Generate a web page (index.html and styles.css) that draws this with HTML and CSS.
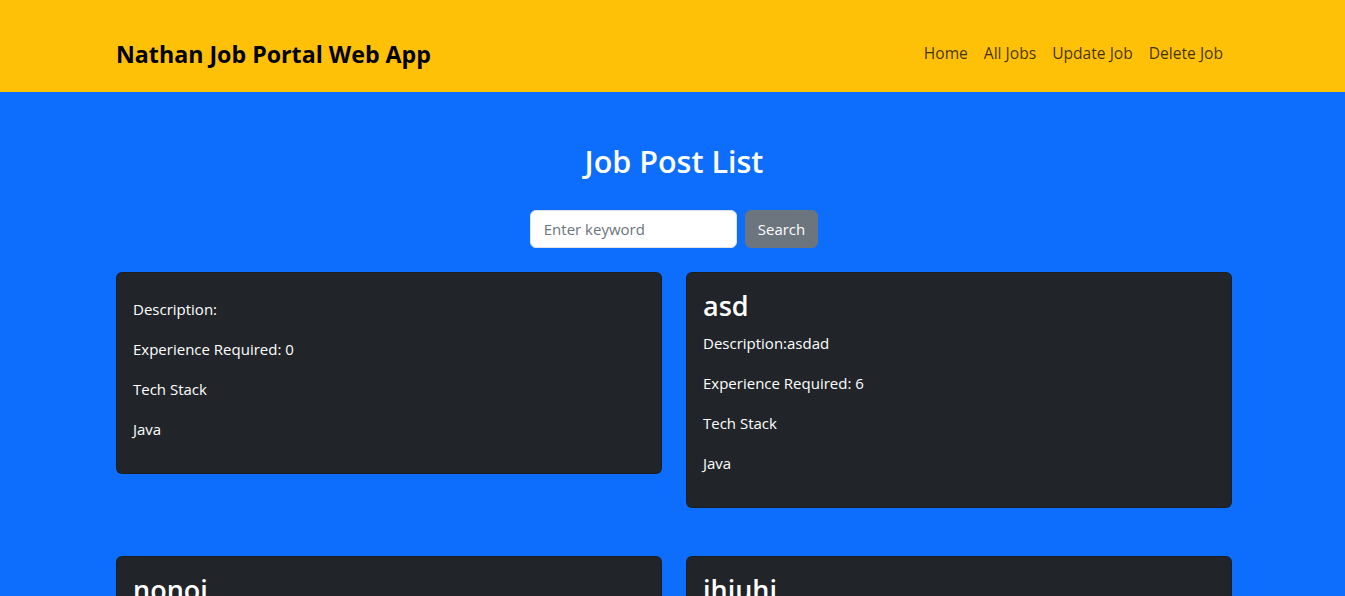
FILE: index.html
```html
<!DOCTYPE html>
<html lang="en">
<head>
<meta charset="utf-8">
<title>Nathan Job Portal Web App</title>
<link rel="stylesheet" href="styles.css">
</head>
<body>
<header class="navbar">
  <div class="container nav-inner">
    <a class="brand" href="#">Nathan Job Portal Web App</a>
    <nav class="nav-links">
      <a class="nav-link" href="#">Home</a>
      <a class="nav-link" href="#">All Jobs</a>
      <a class="nav-link" href="#">Update Job</a>
      <a class="nav-link" href="#">Delete Job</a>
    </nav>
  </div>
</header>
<main class="main">
  <div class="container">
    <h2 class="page-title">Job Post List</h2>
    <form class="search">
      <input class="search-input" type="text" placeholder="Enter keyword">
      <button class="search-btn" type="button">Search</button>
    </form>
    <div class="grid">
      <div class="card">
        <h2 class="card-title"></h2>
        <p>Description:</p>
        <p>Experience Required: 0</p>
        <p>Tech Stack</p>
        <p>Java</p>
      </div>
      <div class="card">
        <h2 class="card-title">asd</h2>
        <p>Description:asdad</p>
        <p>Experience Required: 6</p>
        <p>Tech Stack</p>
        <p>Java</p>
      </div>
      <div class="card">
        <h2 class="card-title">nonoi</h2>
        <p>Description:nono</p>
        <p>Experience Required: 2</p>
        <p>Tech Stack</p>
        <p>Java</p>
      </div>
      <div class="card">
        <h2 class="card-title">ihiuhi</h2>
        <p>Description:hiuh</p>
        <p>Experience Required: 3</p>
        <p>Tech Stack</p>
        <p>Java</p>
      </div>
    </div>
  </div>
</main>
</body>
</html>
```
FILE: styles.css
```css
* { box-sizing: border-box; }
html, body { margin: 0; padding: 0; }
body {
  font-family: "Open Sans", "Noto Sans", sans-serif;
  font-size: 15px;
  line-height: 24px;
  color: #212529;
  background: #0d6efd;
  overflow: hidden;
}
.container {
  width: 1116px;
  margin: 0 0 0 116px;
}
.navbar {
  background: #ffc107;
  height: 92px;
  display: flex;
  align-items: center;
}
.nav-inner {
  display: flex;
  align-items: center;
  justify-content: space-between;
  padding-top: 14px;
}
.brand {
  font-size: 23.2px;
  font-weight: 700;
  color: #000;
  text-decoration: none;
  margin-top: 1px;
}
.nav-links { display: flex; margin-right: 1px; }
.nav-link {
  padding: 8px;
  font-size: 15.6px;
  color: rgba(0,0,0,0.75);
  text-decoration: none;
}
.main { padding-top: 50px; }
.page-title {
  margin: 0 0 30px;
  text-align: center;
  color: #fff;
  font-size: 30.5px;
  font-weight: 600;
  line-height: 38px;
}
.search {
  display: flex;
  justify-content: center;
  gap: 8px;
  margin-bottom: 24px;
}
.search-input {
  width: 207px;
  height: 38px;
  padding: 6px 13px;
  font: inherit;
  border: 1px solid #dee2e6;
  border-radius: 6px;
  background: #fff;
}
.search-input::placeholder { color: #6c757d; }
.search-btn {
  height: 38px;
  padding: 6px 12px;
  font: inherit;
  color: #fff;
  background: #6c757d;
  border: 1px solid #6c757d;
  border-radius: 6px;
}
.grid {
  display: grid;
  grid-template-columns: 1fr 1fr;
  column-gap: 24px;
  row-gap: 48px;
  align-items: start;
}
.card {
  background: #212529;
  color: #fff;
  border: 1px solid rgba(0,0,0,0.175);
  border-radius: 6px;
  padding: 16px;
}
.card-title {
  margin: 0 0 8px;
  font-size: 27px;
  font-weight: 600;
  line-height: 33.6px;
}
.card p { margin: 0 0 16px; }
```
